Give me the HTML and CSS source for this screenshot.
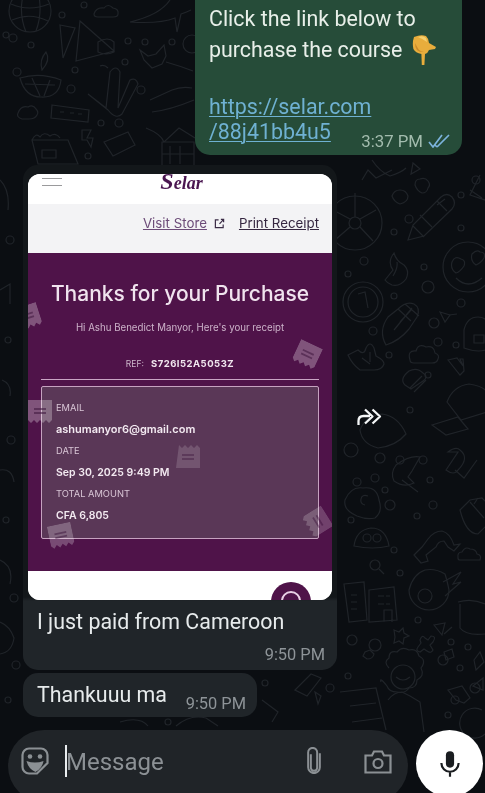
FILE: index.html
```html
<!DOCTYPE html>
<html lang="en">
<head>
<meta charset="utf-8">
<title>Chat</title>
<link rel="stylesheet" href="styles.css">
</head>
<body>
<main class="screen">
  <svg class="wallpaper" viewBox="0 0 485 793" aria-hidden="true">
    <!-- top left -->
    <circle cx="30" cy="11" r="21"/><path d="M11 4q18 8 38 0M12 20q18-8 36 1M24 -8q-6 20 2 40M38 -8q5 20-2 39"/>
    <path d="M60 25l15 3-12 30zM80 21l34 30-38 10zM98 42q10-6 16 0v10q-8 4-16 0z"/>
    <path d="M94 14q2-7 10-6 4-5 9 0 6 1 5 6 0 3-5 3H98q-4 0-4-3z"/>
    <path d="M140 50l8 6 8-2 8-9 2 11-4 8-10 4-8-8zM166 62q14 4 27 9M170 0q-10 15-40 22 30 2 45-4l2 14 4-18q6-2 10-4"/>
    <path d="M20 78q20-6 41 2-2 18-20 17-16 0-21-19zM25 84l30 1M32 78l8 18M50 80l-6 16M42 70q-3-10 4-18 5 8-4 18z"/>
    <path d="M88 94l18 14 4-36q6-8 10 0l-2 36 12-28q6-3 8 4l-16 30q-6 6-14-4L88 94zM108 68q-4-4-8-2"/>
    <path d="M52 105l37 5-1 12-37-4zM60 112h4M70 113h4M78 114h4"/>
    <path d="M18 113q3-8 10-6 5-3 8 2 3 3 1 6-2 4-8 4H22q-6-2-4-6z"/>
    <path d="M82 130h9l-4 8h6l-2 9-4-7h-5z"/>
    <path d="M104 142l24-10 7 13-22 11z"/>
    <path d="M32 140h36l10 24H38zM32 140q4-8 8-3 4-6 10-1 6-4 10 2M42 150h14v8H42z"/>
    <path d="M146 128q15 6 18 14l15-14 16 10M162 142h32v24h-32zM170 146v18M180 146v18M162 154h32M150 100l22-10q10-4 20-2M152 112q18-2 42-12"/>
    <circle cx="128" cy="41" r="3"/><circle cx="75" cy="70" r="3"/><circle cx="71" cy="89" r="4"/><circle cx="13" cy="38" r="4"/><circle cx="17" cy="72" r="4"/><circle cx="6" cy="35" r="3"/><circle cx="31" cy="45" r="3"/><circle cx="62" cy="15" r="3"/><circle cx="141" cy="90" r="4"/><circle cx="119" cy="123" r="4"/><circle cx="101" cy="123" r="3"/><circle cx="145" cy="42" r="3"/><circle cx="172" cy="42" r="3"/><circle cx="125" cy="62" r="3"/><circle cx="84" cy="5" r="3"/><circle cx="88" cy="156" r="3"/>
    <circle cx="192" cy="44" r="9"/>
    <!-- right column, upper -->
    <circle cx="355" cy="223" r="27"/><circle cx="355" cy="223" r="6"/><path d="M355 217v-24M350 219l-17-9M360 219l16-9M350 227l-15 13M360 227l13 14"/>
    <path d="M362 180l6-10 8 8 16-8M372 160q8 12 18 16 12-4 16-8"/>
    <path d="M408 240l5-15 28-28q6-5 11 0 5 6 0 12l-28 27zM413 226l11 11M420 215l12 12M437 201l10 10"/>
    <circle cx="468" cy="267" r="25"/><path d="M452 262q3-7 9-3 5 1 3 7-4 6-8 7-6-4-4-11zM472 254q5-5 8-2 6 0 4 6-3 5-8 7-6-4-4-11zM456 278q12 12 26 0"/>
    <circle cx="363" cy="302" r="20"/><circle cx="363" cy="302" r="15"/><path d="M358 294l7-2 3 16"/>
    <path d="M385 280l8-10q-6-8 1-17 2 8 10 12 6 6 2 14-6 8-14 6-5-2-7-5zM393 276q5-8 4-14"/>
    <path d="M386 345q-8-14 2-28l10-8q8-8 16-5 7 4 3 13l-8 12q-10 12-23 16zM398 309l13 12M405 304l14 12M400 322l11-12M394 330l18-22"/>
    <path d="M410 360q-3-10 6-9 2-8 10-4 8-2 9 6 5 2 3 6-1 4-6 4h-18q-4 0-4-3z"/>
    <path d="M348 355l10-5q6 6 8-2 4-8 8 0l2 8q8 4 8 8-2 6-10 6h-14q-8-6-12-15zM362 358l8 6M370 352v10"/>
    <path d="M437 205l8-6M470 190l12 8M480 175l-10 20 18 6"/>
    <path d="M440 312l10 3-5 7zM449 315l8-1"/>
    <path d="M464 330q3-13 14-13 11 0 12 13v18q-10 6-26 0zM474 335h10v8h-10z"/>
    <path d="M448 360l9-2 6 8-3-7 3 0 1 12-4 4z"/>
    <path d="M415 185q0-6 5-6 5-2 8 2 3 4 0 7-1 5-6 5-5-2-7-8zM392 196q2-6 8-6 6 0 8 6 0 6-8 8-6-2-8-8zM413 163l7 6-9 5z"/>
    <circle cx="409" cy="219" r="4"/><circle cx="394" cy="232" r="3"/><circle cx="364" cy="261" r="4"/><circle cx="348" cy="274" r="3"/><circle cx="424" cy="267" r="3"/><circle cx="428" cy="287" r="6"/><circle cx="394" cy="296" r="3"/><circle cx="373" cy="331" r="4"/><circle cx="434" cy="323" r="5"/><circle cx="438" cy="342" r="4"/><circle cx="456" cy="345" r="3"/><circle cx="428" cy="375" r="3"/><circle cx="461" cy="303" r="4"/><circle cx="461" cy="195" r="3"/><circle cx="461" cy="228" r="3"/><circle cx="389" cy="355" r="3"/><circle cx="476" cy="180" r="4"/>
    <!-- right column, middle -->
    <path d="M405 385q-6-6 4-14 8-4 14 2 6 4 0 8l-12 8zM410 388l12-12M414 392l12-12"/>
    <path d="M447 402q6-16 22-18 14 2 18 8v20l-26 8zM432 425l26-8 10 12-22 6z"/>
    <path d="M360 430q5-14 22-16 16 2 24 20-10 12-28 14-16-4-18-18z"/>
    <path d="M396 465q14-10 24-8-8 14-8 14l-4 6 6 6q-10 5-20-2-4-8 2-16zM402 480l16 12"/>
    <path d="M448 452q8-6 12-2 10 8-2 20-4 6-12 0l12-18zM455 470l9 8 13-18"/>
    <circle cx="351" cy="450" r="7"/><circle cx="380" cy="458" r="5"/><circle cx="375" cy="478" r="4"/><circle cx="400" cy="460" r="4"/><circle cx="385" cy="490" r="3"/><circle cx="357" cy="482" r="4"/><circle cx="410" cy="410" r="3"/><circle cx="423" cy="460" r="4"/><circle cx="430" cy="480" r="3"/>
    <!-- right column, lower -->
    <path d="M345 500q6-14 18-12 14-2 16 12 4 12-4 18-8 2-18-2-14-6-12-16zM368 496q-6-2-7 3-1 5 4 6"/>
    <path d="M354 546q2-16 17-18 15 0 18 18-16 4-35 0z"/><circle cx="367" cy="538" r="4"/><circle cx="377" cy="538" r="4"/>
    <path d="M414 555l8-8 6-8q6-8 14-8 8 2 12 14l6-1-6 7-6-4-4-6q-6 0-8 6l-10 8 2 6-7 2z"/>
    <path d="M460 510l10-10 12-2 6 6v20l-10 10q-12 0-18-24zM470 502l14 16M478 498l-4 6"/>
    <path d="M458 558q-1-6 4-6 3-6 8-3 6 0 7 5 5 1 3 6h-20q-2 0-2-2z"/>
    <circle cx="375" cy="565" r="5"/><path d="M379 569l5 5"/>
    <path d="M344 584l20 -2 3 38-18 2zM369 590l25-3 3 33-28 2zM351 595h6M351 602h6M351 609h6M378 596h6M386 596h4M378 604h6M386 604h4M384 622v-12h8v12"/>
    <path d="M409 590a20 20 0 1 0 40 0q-2-10-4-16-10-6-20-4-12 4-16 20z"/><circle cx="425" cy="596" r="7"/><path d="M443 582l18-10-8 12 8-2-16 14"/>
    <path d="M458 602q14-4 27 2M460 604v24q6 8 25 6"/>
    <path d="M394 630l5 2 4-4 1 5 5 3-5 2-1 6-4-3-5 2 1-6z"/>
    <path d="M420 640q2-6 5-2l3 2 3-4q6 0 2 6l-3 3 3 5q-2 4-6 1l-3-2-4 3q-5-1-2-5l3-4z"/>
    <path d="M434 625l11-2-3 12zM444 634l8-7"/>
    <path d="M370 650l-5 2-2 4 4 3q6 0 7-5zM474 660l6-8 4 10-8 8z"/>
    <circle cx="403" cy="677" r="12"/><path d="M389 668q-6-6 0-10 0-8 8-6 5-6 12-2 8-2 10 6 8 4 2 12 4 8-4 12 0 8-8 8-4 6-12 4-8 0-10-6-8-10-6-4-10z"/>
    <path d="M396 677q7 6 14 0M388 700q6-8 14-8l8 4 10 6 4 30"/>
    <path d="M340 692l36-4 10 42M350 706l26-3M352 722l30-4"/>
    <path d="M448 690l14-4 8 12-6 5-8-3zM473 686l10-8v12zM444 652l8-3 2 8-8 3zM482 710a15 15 0 1 0 3 24"/>
    <circle cx="351" cy="520" r="3"/><circle cx="390" cy="505" r="5"/><circle cx="417" cy="516" r="3"/><circle cx="433" cy="505" r="4"/><circle cx="394" cy="550" r="3"/><circle cx="400" cy="573" r="3"/><circle cx="418" cy="620" r="3"/><circle cx="451" cy="642" r="3"/><circle cx="468" cy="647" r="3"/><circle cx="443" cy="660" r="5"/><circle cx="475" cy="688" r="5"/><circle cx="455" cy="700" r="4"/><circle cx="448" cy="715" r="3"/><circle cx="352" cy="640" r="5"/><circle cx="375" cy="645" r="6"/><circle cx="348" cy="676" r="3"/><circle cx="460" cy="668" r="3"/>
    <!-- left margin -->
    <path d="M0 180q10 10 8 30M0 290l10-6v20M2 380q10 4 8 16M0 470q12-2 14 12M0 560q14 6 10 24M0 622q10 4 14 16-2 14-14 16"/>
    <circle cx="10" cy="240" r="4"/><circle cx="8" cy="340" r="3"/><circle cx="11" cy="440" r="4"/><circle cx="6" cy="520" r="3"/><circle cx="14" cy="598" r="4"/><circle cx="16" cy="665" r="4"/><circle cx="8" cy="700" r="3"/>
    <!-- bottom strip -->
    <path d="M120 722q20-6 28 4M176 726q14-12 30-8l12 8M262 700l16 12-6 10M295 690l16-16 10 4-14 18zM315 692l6 4-3 8z"/>
    <circle cx="265" cy="683" r="3"/><circle cx="330" cy="688" r="4"/><circle cx="168" cy="722" r="3"/>
  </svg>

  <section class="sent">
    <p class="line">Click the link below to</p>
    <p class="line">purchase the course<svg class="emoji" viewBox="0 0 26 31" aria-label="pointing down"><path fill="#e8ad3c" d="M3 3q7-3 12-1 3 3 3 7l7 4-1 2-6 1q-1 3-4 4l-.6 11q-1 2-2.600 0l-.4-11q-6-1-8-5Q1 9 3 3z"/><path fill="#c98a2a" d="M4 9q2 4 4 7 3 2 5 2-9 1-9-9z"/><path fill="#f5cf6e" d="M7 3q5-2 8 1l1 4q-4-3-9-5z"/></svg></p>
    <div class="last">
      <div class="links">
        <a class="link">https://selar.com</a>
        <a class="link">/88j41bb4u5</a>
      </div>
      <span class="meta-sent">3:37 PM<svg class="ticks" viewBox="0 0 22 14"><path d="M1 8l4 5L14 1M9 13L21 1M7 11l2 2"/></svg></span>
    </div>
  </section>

  <div class="forward-row">
    <article class="bubble">
      <div class="receipt">
        <header class="topbar">
          <span class="burger"><i></i><i></i></span>
          <span class="logo"><span class="logo-s">S</span>elar</span>
        </header>
        <nav class="actions">
          <a class="visit">Visit Store</a>
          <svg class="ext" viewBox="0 0 12 12"><path d="M5 2H1.500v8.500H10V7M6 6.500L10.500 1.500M7.500 1.500h3v3"/></svg>
          <a class="print">Print Receipt</a>
        </nav>
        <div class="panel">
          <h1 class="thanks">Thanks for your Purchase</h1>
          <p class="hi">Hi Ashu Benedict Manyor, Here's your receipt</p>
          <p class="ref"><span class="ref-key">REF:</span><b class="ref-val">S726I52A5053Z</b></p>
          <hr class="rule">
          <dl class="details">
            <dt>EMAIL</dt><dd class="dd-email">ashumanyor6@gmail.com</dd>
            <dt>DATE</dt><dd>Sep 30, 2025 9:49 PM</dd>
            <dt>TOTAL AMOUNT</dt><dd>CFA 6,805</dd>
          </dl>
          <svg class="stamp s1" viewBox="0 0 24 24"><path d="M0 0h24v20l-3 3-3-3-3 3-3-3-3 3-3-3-3 3-3-3z"/><path class="bar" d="M6 9h12M6 13h12"/></svg>
          <svg class="stamp s2" viewBox="0 0 24 24"><path d="M0 0h24v20l-3 3-3-3-3 3-3-3-3 3-3-3-3 3-3-3z"/><path class="bar" d="M6 9h12M6 13h12"/></svg>
          <svg class="stamp s3" viewBox="0 0 24 24"><path d="M0 0h24v20l-3 3-3-3-3 3-3-3-3 3-3-3-3 3-3-3z"/><path class="bar" d="M6 9h12M6 13h12"/></svg>
          <svg class="stamp s4" viewBox="0 0 24 24"><path d="M0 24h24V4l-3-3-3 3-3-3-3 3-3-3-3 3-3-3z"/><path class="bar" d="M6 11h12M6 15h12"/></svg>
          <svg class="stamp s5" viewBox="0 0 24 24"><path d="M0 0h24v20l-3 3-3-3-3 3-3-3-3 3-3-3-3 3-3-3z"/><path class="bar" d="M6 9h12M6 13h12"/></svg>
          <svg class="stamp s6" viewBox="0 0 24 24"><path d="M0 0h24v20l-3 3-3-3-3 3-3-3-3 3-3-3-3 3-3-3z"/><path class="bar" d="M6 9h12M6 13h12"/></svg>
        </div>
        <div class="foot">
          <span class="foot-title">Purchase Summary</span>
          <span class="fab"><i></i></span>
        </div>
      </div>
      <p class="caption">I just paid from Cameroon</p>
      <span class="time time-right">9:50 PM</span>
    </article>
    <svg class="forward" viewBox="0 0 28 20"><path d="M1.500 17V13q0-5 5-5H13M8 1.500l7.500 7-7.500 7M15.500 1.500l7.500 7-7.500 7"/></svg>
  </div>

  <article class="bubble-small">
    <p class="caption-small">Thankuuu ma</p>
    <span class="time">9:50 PM</span>
  </article>

  <footer class="composer">
    <div class="input">
      <svg class="ico sticker" viewBox="0 0 28 28"><path d="M8 1.500h12a6.500 6.500 0 0 1 6.500 6.500v8L16 26.500H8A6.500 6.500 0 0 1 1.500 20V8A6.500 6.500 0 0 1 8 1.500z"/><path class="fillicon" d="M5.500 14q8.500 3 17 0-1 7-8 11-7-3-9-11z"/><circle class="fillicon" cx="9" cy="9.500" r="2.300"/><circle class="fillicon" cx="19" cy="9.500" r="2.300"/></svg>
      <span class="cursor"></span>
      <span class="placeholder">Message</span>
      <svg class="ico clip" viewBox="0 0 20 30"><path d="M6.500 8v15a3.500 3.500 0 0 0 7 0V6a5 5 0 0 0-10 0v16.500a6.500 6.500 0 0 0 13 0V7"/></svg>
      <svg class="ico camera" viewBox="0 0 28 24"><path d="M1.500 5.500h6.500l2-4h8l2 4h6.500v17h-25z"/><circle cx="14" cy="13.500" r="4.500"/></svg>
    </div>
    <button class="mic" aria-label="Record">
      <svg viewBox="0 0 22 30"><rect x="6.500" y="1" width="9" height="18" rx="4.500"/><path class="mic-arc" d="M1.500 14a9.500 9.500 0 0 0 19 0M11 23.500V29"/></svg>
    </button>
  </footer>
</main>
</body>
</html>
```

FILE: styles.css
```css
* { box-sizing: border-box; }
html, body { margin: 0; padding: 0; background: #0b0e12; }
.screen {
  position: relative;
  width: 485px;
  height: 793px;
  overflow: hidden;
  display: flex;
  flex-direction: column;
  background: #0b0e12;
  font-family: Roboto, "Liberation Sans", sans-serif;
  color: #e9edef;
  filter: blur(.4px);
}
.wallpaper {
  position: absolute;
  inset: 0;
  width: 485px;
  height: 793px;
  fill: none;
  stroke: #202429;
  stroke-width: 1.2;
}
.sent, .forward-row, .bubble-small, .composer { position: relative; }

.sent {
  margin-left: 195px;
  width: 267px;
  height: 155px;
  padding: 3px 14px 0;
  background: #264c39;
  border-radius: 0 0 15px 15px;
}
.line {
  margin: 0;
  font-size: 21.400px;
  line-height: 31px;
  color: #e8efe9;
  white-space: nowrap;
}
.emoji { width: 26px; height: 31px; margin-left: 9px; vertical-align: -8px; }
.last { display: flex; justify-content: space-between; align-items: flex-end; margin-top: 29px; margin-right: -2px; }
.links { display: flex; flex-direction: column; flex: none; margin-right: -20px; }
.link {
  font-size: 21.400px;
  line-height: 25px;
  color: #6fb1d2;
  text-decoration: underline;
  text-underline-offset: 2px;
  text-decoration-thickness: 1px;
  white-space: nowrap;
}
.meta-sent { display: flex; flex: none; align-items: center; gap: 5px; font-size: 16.800px; color: #a3bcae; line-height: 20px; margin-bottom: -7px; white-space: nowrap; }
.ticks { width: 22px; height: 14px; fill: none; stroke: #7cb3dc; stroke-width: 1.700; }

.forward-row { margin-top: 10px; display: flex; align-items: center; margin-left: 23px; }
.bubble {
  position: relative;
  width: 314px;
  height: 505px;
  padding: 9px 5px 0;
  background: linear-gradient(#13171a 0, #13171a 432px, #202529 436px);
  border-radius: 15px;
}
.receipt {
  position: relative;
  width: 304px;
  height: 426px;
  border-radius: 12px;
  overflow: hidden;
  background: #fff;
  font-family: Inter, "Liberation Sans", sans-serif;
}
.topbar { position: relative; height: 30px; background: #fff; display: flex; justify-content: center; }
.burger { position: absolute; left: 14px; top: 4px; width: 20px; display: flex; flex-direction: column; gap: 6px; }
.burger i { display: block; height: 1px; background: #9a9a9c; }
.logo {
  font-family: "Liberation Serif", serif;
  font-style: italic;
  font-weight: 700;
  font-size: 18px;
  line-height: 14px;
  color: #4a1650;
  margin-left: 3px;
}
.logo-s { font-size: 24px; line-height: 14px; }
.actions {
  height: 49px;
  background: #f3f3f5;
  display: flex;
  align-items: center;
  justify-content: flex-end;
  padding: 0 13px 11px 0;
  font-size: 13.300px;
}
.visit { color: #6c4b78; text-decoration: underline; }
.print { color: #352640; text-decoration: underline; margin-left: 14px; }
.ext { width: 11px; height: 11px; margin-left: 7px; fill: none; stroke: #3b2c46; stroke-width: 1.300; }

.panel { position: relative; height: 318px; background: #4f1349; padding: 0 13px; color: #f2e6f0; }
.thanks { margin: 0; padding-top: 28px; font-size: 21px; line-height: 26px; font-weight: 500; text-align: center; white-space: nowrap; color: #f0e3ee; }
.hi { margin: 14px 0 0; font-size: 9.700px; line-height: 14px; text-align: center; color: #cdb3ca; white-space: nowrap; }
.ref { margin: 22px 0 0; line-height: 14px; text-align: center; font-size: 9px; color: #cdb8cb; white-space: nowrap; }
.ref-key { margin-right: 7px; font-size: 8.500px; }
.ref-val { font-size: 9.500px; color: #f1e7ef; letter-spacing: .5px; }
.rule { margin: 8px 0 0; height: 1px; border: 0; background: #c9a5c4; }
.details {
  margin: 6px 0 0;
  height: 153px;
  padding: 10px 14px 0;
  border: 1px solid #c6a2c0;
  border-radius: 2px;
  background: #5a3757;
}
.details dt { font-size: 9.300px; line-height: 21.500px; color: #d9c6d6; }
.details dd { margin: 0; font-size: 10.500px; line-height: 21.500px; font-weight: 600; color: #f3eaf1; white-space: nowrap; }
.details .dd-email { font-size: 11px; }
.stamp { position: absolute; width: 24px; height: 24px; fill: rgba(255, 255, 255, .28); }
.stamp .bar { fill: none; stroke: rgba(60, 20, 60, .55); stroke-width: 1.800; }
.s1 { left: -12px; top: 52px; transform: rotate(-18deg); }
.s2 { left: 267px; top: 90px; transform: rotate(25deg); }
.s3 { left: 0; top: 147px; }
.s4 { left: 148px; top: 191px; opacity: .55; }
.s5 { left: 277px; top: 257px; transform: rotate(58deg); opacity: .7; }
.s6 { left: 21px; top: 271px; transform: rotate(-12deg); opacity: .85; }

.foot { position: relative; height: 29px; background: #fff; display: flex; justify-content: center; overflow: hidden; }
.foot-title { margin-top: 26px; font-size: 15px; line-height: 18px; font-weight: 500; color: #3a3a3a; white-space: nowrap; }
.fab {
  position: absolute;
  left: 243px;
  top: 11px;
  width: 40px;
  height: 40px;
  border-radius: 50%;
  background: #4f1349;
  display: flex;
  justify-content: center;
  padding-top: 9px;
}
.fab i { width: 20px; height: 20px; border: 2px solid #e9cfe6; border-radius: 50%; }

.caption { margin: 9px 0 0 9px; font-size: 21.400px; line-height: 26px; color: #e7ebec; white-space: nowrap; }
.time { font-size: 16.400px; line-height: 20px; color: #8e9498; white-space: nowrap; }
.time-right { position: absolute; right: 12px; bottom: 5px; }

.forward { width: 28px; height: 20px; margin-left: 20px; fill: none; stroke: #f4f6f7; stroke-width: 2.300; stroke-linejoin: round; }

.bubble-small {
  margin: 3px 0 0 23px;
  width: 234px;
  height: 44px;
  padding: 0 11px 0 14px;
  background: #202529;
  border-radius: 15px;
  display: flex;
  justify-content: space-between;
}
.caption-small { margin: 9px 0 0; font-size: 21.400px; line-height: 26px; color: #e7ebec; white-space: nowrap; }
.bubble-small .time { margin-top: 21px; }

.composer { margin-top: 13px; height: 63px; display: flex; padding-left: 8px; gap: 8px; }
.input {
  position: relative;
  width: 400px;
  height: 72px;
  border-radius: 36px;
  background: #202428;
  display: flex;
  align-items: flex-start;
  padding-left: 13px;
}
.ico { fill: none; stroke: #8b9094; stroke-width: 2.200; flex: none; }
.sticker { width: 28px; height: 28px; margin-top: 17px; }
.fillicon { fill: #8b9094; stroke: none; }
.cursor { width: 2px; height: 32px; margin: 15px 0 0 16px; background: #e9edef; flex: none; }
.placeholder { margin: 15px 0 0 -1px; font-size: 24px; line-height: 34px; color: #8c9195; flex: 1; }
.clip { width: 18px; height: 27px; margin: 17px 0 0; }
.camera { width: 28px; height: 24px; margin: 20px 16px 0 41px; }
.mic {
  width: 67px;
  height: 67px;
  padding: 0;
  border: 0;
  border-radius: 50%;
  background: #fff;
  display: flex;
  align-items: center;
  justify-content: center;
  flex: none;
}
.mic svg { width: 20px; height: 28px; fill: #1a1d20; }
.mic-arc { fill: none; stroke: #1a1d20; stroke-width: 2.400; }
```
